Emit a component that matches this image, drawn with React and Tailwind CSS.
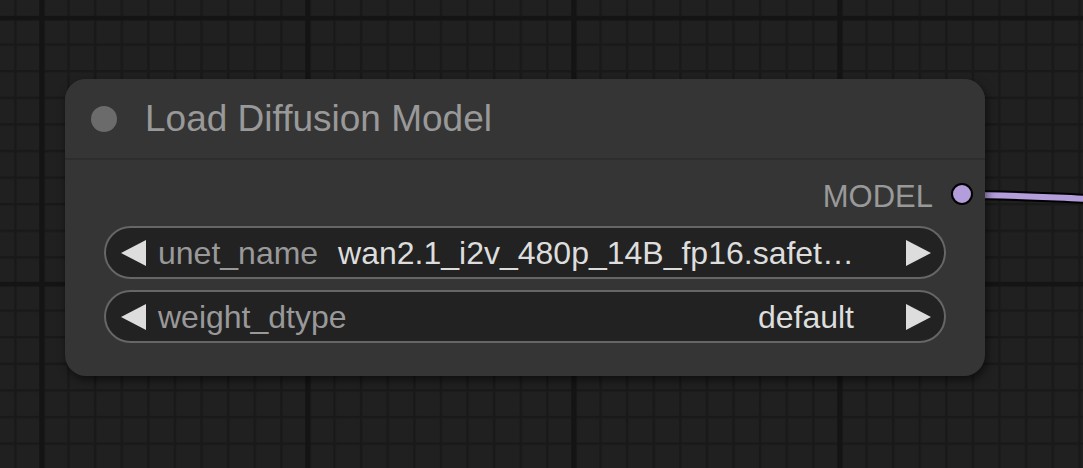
import React from "react";

const widgets = [
  { label: "unet_name", value: "wan2.1_i2v_480p_14B_fp16.safet…" },
  { label: "weight_dtype", value: "default" },
];

function Arrow({ dir }) {
  return (
    <svg width="25" height="26" viewBox="0 0 25 26" className="shrink-0">
      {dir === "left" ? (
        <polygon points="25,0 25,26 0,13" fill="#dddddd" />
      ) : (
        <polygon points="0,0 0,26 25,13" fill="#dddddd" />
      )}
    </svg>
  );
}

function ComboWidget({ label, value }) {
  return (
    <div className="flex items-center h-[53px] rounded-full border-2 border-[#666] bg-[#222] pl-[15px] pr-[13px] text-[32px] leading-[40px]">
      <Arrow dir="left" />
      <span className="ml-[12px] text-[#999] whitespace-nowrap">{label}</span>
      <span className="flex-1 text-right text-[#ddd] whitespace-nowrap">{value}</span>
      <span className="w-[52px] shrink-0" />
      <Arrow dir="right" />
    </div>
  );
}

export default function App() {
  return (
    <div
      className="relative w-[1083px] h-[468px] overflow-hidden bg-[#202020]"
      style={{ fontFamily: '"Liberation Sans", Arial, sans-serif' }}
    >
      {/* canvas grid + link */}
      <svg className="absolute inset-0" width="1083" height="468">
        <defs>
          <pattern id="minor" patternUnits="userSpaceOnUse" x="14.1" y="16.8" width="26.6" height="26.6">
            <rect x="0" y="0" width="2.6" height="26.6" fill="#191919" />
            <rect x="0" y="0" width="26.6" height="2.6" fill="#191919" />
          </pattern>
          <pattern id="major" patternUnits="userSpaceOnUse" x="39.2" y="15.8" width="266" height="266">
            <rect x="0" y="0" width="5.6" height="266" fill="#141414" />
            <rect x="0" y="0" width="266" height="4.8" fill="#141414" />
          </pattern>
        </defs>
        <rect width="1083" height="468" fill="url(#minor)" />
        <rect width="1083" height="468" fill="url(#major)" />
        <path d="M962 195 C 1010 195, 1040 197, 1090 199" stroke="#000" strokeWidth="10" fill="none" />
        <path d="M962 195 C 1010 195, 1040 197, 1090 199" stroke="#b39ddb" strokeWidth="6" fill="none" />
      </svg>

      {/* node */}
      <div className="absolute left-[65px] top-[79px] w-[920px] rounded-[21px] bg-[#353535] shadow-[2px_4px_10px_rgba(0,0,0,0.55)]">
        <div className="flex items-center h-[81px] pl-[26px] border-b-2 border-[#2d2d2d] rounded-t-[21px] bg-[#353535]">
          <div className="w-[26px] h-[26px] rounded-full bg-[#6b6b6b]" />
          <span className="ml-[28px] text-[37px] leading-none text-[#999]">Load Diffusion Model</span>
        </div>
        <div className="pt-[9px] pb-[33px]">
          <div className="flex items-center justify-end h-[50px] pr-[12px]">
            <span className="text-[31px] leading-none text-[#999] mt-[4px]">MODEL</span>
            <div className="ml-[18px] w-[22px] h-[22px] rounded-full bg-[#b39ddb] border-2 border-black" />
          </div>
          <div className="mt-[7px] mx-[39px] flex flex-col gap-[11px]">
            {widgets.map((w) => (
              <ComboWidget key={w.label} label={w.label} value={w.value} />
            ))}
          </div>
        </div>
      </div>
    </div>
  );
}
